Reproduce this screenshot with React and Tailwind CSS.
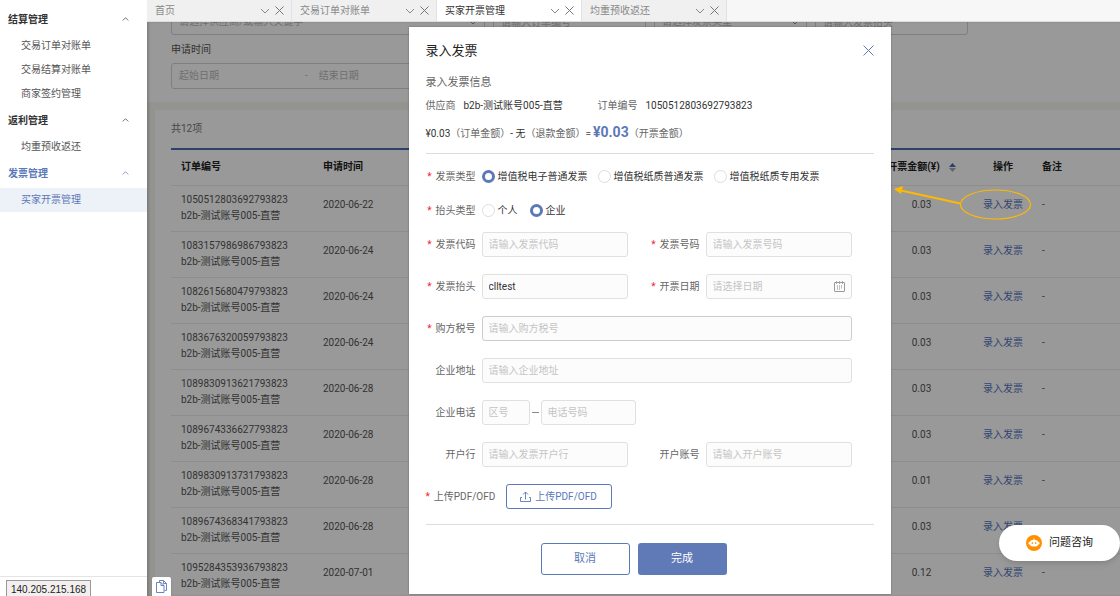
import React from 'react';
import clsx from 'clsx';

const MENU = [
  { title: '结算管理', items: ['交易订单对账单', '交易结算对账单', '商家签约管理'] },
  { title: '返利管理', items: ['均重预收返还'] },
  { title: '发票管理', items: ['买家开票管理'], active: true },
];

const TABS = ['首页', '交易订单对账单', '买家开票管理', '均重预收返还'];

const ORDERS = [
  { id: '1050512803692793823', date: '2020-06-22', amount: '0.03' },
  { id: '1083157986986793823', date: '2020-06-24', amount: '0.03' },
  { id: '1082615680479793823', date: '2020-06-24', amount: '0.03' },
  { id: '1083676320059793823', date: '2020-06-24', amount: '0.03' },
  { id: '1089830913621793823', date: '2020-06-28', amount: '0.03' },
  { id: '1089674336627793823', date: '2020-06-28', amount: '0.03' },
  { id: '1089830913731793823', date: '2020-06-28', amount: '0.01' },
  { id: '1089674368341793823', date: '2020-06-28', amount: '0.03' },
  { id: '1095284353936793823', date: '2020-07-01', amount: '0.12' },
];

const Chevron = ({ up, className }) => (
  <svg viewBox="0 0 10 6" className={className} fill="none" stroke="currentColor" strokeWidth="1">
    <path d={up ? 'M1 5 5 1l4 4' : 'M1 1l4 4 4-4'} />
  </svg>
);

const Cross = ({ className }) => (
  <svg viewBox="0 0 10 10" className={className} fill="none" stroke="currentColor">
    <path d="M.5.5l9 9M9.5.5l-9 9" vectorEffect="non-scaling-stroke" />
  </svg>
);

const Sidebar = () => (
  <aside className="w-[147px] shrink-0 flex flex-col bg-white">
    <nav className="pt-[5px] flex-1">
      {MENU.map((group) => (
        <div key={group.title}>
          <button
            type="button"
            className={clsx(
              'w-full h-[29px] pl-2 pr-[18px] flex items-center justify-between font-bold',
              group.active ? 'text-[#5b78b8]' : 'text-[#333]'
            )}
          >
            {group.title}
            <Chevron up className="w-[7px]" />
          </button>
          {group.items.map((item) => (
            <a
              key={item}
              href="#"
              className={clsx(
                'h-6 pl-[21px] flex items-center',
                group.active ? 'bg-[#edf1f8] text-[#5b78b8]' : 'text-[#555]'
              )}
            >
              {item}
            </a>
          ))}
        </div>
      ))}
    </nav>
    <div className="border-t border-[#e4e4e4] pt-[3px] pl-[6px]">
      <span className="block w-fit px-1 pt-[3px] leading-3 border border-b-0 border-[#999] bg-[#f3efef] text-[#222] font-['Liberation_Sans',sans-serif]">
        140.205.215.168
      </span>
    </div>
  </aside>
);

const TabBar = () => (
  <div className="h-[22px] shrink-0 flex bg-[#f7f7f7] border-b border-[#ddd]">
    {TABS.map((tab, i) => (
      <div
        key={tab}
        className={clsx(
          'w-[145px] flex items-center pl-2 pr-[7px] border-r border-[#e2e2e2]',
          i === 2 ? 'bg-white text-[#333]' : 'bg-[#f0f0f0] text-[#888]'
        )}
      >
        <button type="button" className="flex-1 text-left">{tab}</button>
        <button type="button" aria-label="展开" className="mr-[5px] text-[#888]">
          <Chevron className="w-[10px]" />
        </button>
        <button type="button" aria-label="关闭" className="text-[#777]">
          <Cross className="w-[9px]" />
        </button>
      </div>
    ))}
  </div>
);

const filterBox = 'w-full h-[26px] px-[7px] border border-[#d4d4d4] rounded-[3px] bg-white';

const FilterSelect = ({ label, className }) => (
  <div className={clsx('relative', className)}>
    <select aria-label={label} className={clsx(filterBox, 'appearance-none text-[#bbb]')}>
      <option>{label}</option>
    </select>
    <Chevron className="absolute right-2 top-[11px] w-2 text-[#777]" />
  </div>
);

const Filters = () => (
  <section className="bg-white pl-6 pb-[13px]">
    <div className="max-w-[797px] grid grid-cols-5 gap-x-2">
      <FilterSelect label="请选择供应商/或输入关键字" className="col-span-2" />
      <input aria-label="订单编号" placeholder="请输入订单编号" className={clsx(filterBox, 'placeholder:text-[#bbb]')} />
      <FilterSelect label="请选择发票类型" />
      <input aria-label="发票抬头" placeholder="请输入发票抬头" className={clsx(filterBox, 'placeholder:text-[#bbb]')} />
      <div className="col-span-2">
        <label htmlFor="apply-start" className="h-7 pt-[2px] flex items-center text-[#555]">申请时间</label>
        <div className={clsx(filterBox, 'flex items-center text-[#bbb]')}>
          <input id="apply-start" placeholder="起始日期" className="w-[126px] placeholder:text-[#bbb]" />
          <span>-</span>
          <input aria-label="结束日期" placeholder="结束日期" className="flex-1 min-w-0 pl-[11px] placeholder:text-[#bbb]" />
        </div>
      </div>
    </div>
  </section>
);

const OrderTable = () => (
  <section className="mt-2 ml-2 pl-4 pt-2 bg-white">
    <p className="h-[30px] pt-1 text-[#777]">共12项</p>
    <table className="w-full table-fixed border-t-2 border-[#4a6cb3] text-[#555]">
      <thead>
        <tr className="h-[36px] text-[#222] text-left border-b border-[#ececec]">
          <th className="w-[142px] pl-[10px]">订单编号</th>
          <th className="pl-[10px]">申请时间</th>
          <th className="w-[101px]">
            <span className="flex items-center justify-center gap-[9px]">
              开票金额(¥)
              <svg viewBox="0 0 7 9" className="w-[7px]">
                <path d="M3.5 0 7 4H0z" fill="#4a6cb3" />
                <path d="M3.5 9 0 5h7z" fill="#aaa" />
              </svg>
            </span>
          </th>
          <th className="w-[62px] text-center">操作</th>
          <th className="w-[86px] pl-2">备注</th>
        </tr>
      </thead>
      <tbody>
        {ORDERS.map((order) => (
          <tr key={order.id} className="h-[46px] border-b border-[#ececec]">
            <td className="pl-[10px] leading-4">
              {order.id}
              <br />
              b2b-测试账号005-直营
            </td>
            <td className="pl-[10px] pb-[6px]">{order.date}</td>
            <td className="pb-[6px] text-center">{order.amount}</td>
            <td className="pb-[6px] text-center">
              <a href="#" className="text-[#5574c0]">录入发票</a>
            </td>
            <td className="pl-2 pb-[6px]">-</td>
          </tr>
        ))}
      </tbody>
    </table>
  </section>
);

const Star = () => <span className="mr-1 text-[#f5222d]">*</span>;

const fieldBox =
  'h-[25px] min-w-0 px-[6px] border rounded-[3px] bg-[#fcfcfc] text-[#333] placeholder:text-[#c4c4c4]';

const Field = ({ id, label, required, wide, children, ...rest }) => (
  <div className={clsx('flex items-center gap-[6px]', wide && 'col-span-2')}>
    <label htmlFor={id} className="w-[50px] text-right whitespace-nowrap">
      {required && <Star />}
      {label}
    </label>
    {children || (
      <input id={id} className={clsx(fieldBox, 'flex-1', id === 'tax-no' ? 'border-[#ccc]' : 'border-[#e0e0e0]')} {...rest} />
    )}
  </div>
);

const RadioRow = ({ name, label, options, checked, className }) => (
  <div role="radiogroup" aria-labelledby={name} className="h-[25px] flex items-center gap-[6px]">
    <span id={name} className="w-[50px] text-right whitespace-nowrap">
      <Star />
      {label}
    </span>
    <div className={clsx('flex', className)}>
      {options.map((option, i) => (
        <label key={option} className="flex items-center gap-[3px] whitespace-nowrap text-[#333]">
          <input
            type="radio"
            name={name}
            defaultChecked={i === checked}
            className="appearance-none w-[13px] h-[13px] rounded-full border border-[#ddd] bg-white checked:border-[3px] checked:border-[#5b78b8]"
          />
          {option}
        </label>
      ))}
    </div>
  </div>
);

const CalendarIcon = () => (
  <svg viewBox="0 0 11 11" className="absolute right-[7px] top-[7px] w-[11px]" fill="none" stroke="#999">
    <rect x=".5" y="1.5" width="10" height="9" rx=".5" />
    <path d="M2.5 0v3M5.5 0v3M8.5 0v3" strokeWidth=".8" />
    <path d="M3.5 4v5M5.5 4v5M7.5 4v3.5" strokeWidth=".6" />
  </svg>
);

const InvoiceDialog = () => (
  <div role="dialog" aria-label="录入发票" className="w-[482px] self-start bg-white px-[17px] pb-[19px] text-[#666] shadow-[0_0_2px_rgba(0,0,0,0.3)]">
    <div className="h-[47px] flex items-center justify-between">
      <h1 className="text-[13px] text-[#222]">录入发票</h1>
      <button type="button" aria-label="关闭" className="text-[#5b78b8]">
        <Cross className="w-[11px]" />
      </button>
    </div>

    <h2 className="h-[18px] leading-[18px] text-[11px]">录入发票信息</h2>
    <div className="h-7 flex items-center">
      <p className="w-[172px] flex gap-2">
        供应商<span className="text-[#333]">b2b-测试账号005-直营</span>
      </p>
      <p className="flex gap-2">
        订单编号<span className="text-[#333]">1050512803692793823</span>
      </p>
    </div>
    <p className="h-[34px] flex items-baseline pt-[2px] border-b border-[#ddd] whitespace-nowrap">
      <span className="text-[#333]">¥0.03</span>（订单金额）
      <span className="text-[#333]">- 无</span>（退款金额）
      <span>=</span>
      <strong className="ml-[2px] text-[14px] leading-5 text-[#5b78b8]">¥0.03</strong>（开票金额）
    </p>

    <form className="pt-[10px] pr-[22px]">
      <div className="grid gap-[9px] mb-[9px]">
        <RadioRow
          name="invoice-type"
          label="发票类型"
          options={['增值税电子普通发票', '增值税纸质普通发票', '增值税纸质专用发票']}
          checked={0}
          className="gap-[10px]"
        />
        <RadioRow name="title-type" label="抬头类型" options={['个人', '企业']} checked={1} className="gap-3" />
      </div>
      <div className="grid grid-cols-2 gap-x-[22px] gap-y-[17px]">
        <Field id="code" label="发票代码" required placeholder="请输入发票代码" />
        <Field id="number" label="发票号码" required placeholder="请输入发票号码" />
        <Field id="title" label="发票抬头" required defaultValue="clltest" />
        <Field id="date" label="开票日期" required>
          <div className="relative flex-1 flex">
            <input id="date" placeholder="请选择日期" className={clsx(fieldBox, 'w-full border-[#e0e0e0]')} />
            <CalendarIcon />
          </div>
        </Field>
        <Field id="tax-no" label="购方税号" required wide placeholder="请输入购方税号" />
        <Field id="address" label="企业地址" wide placeholder="请输入企业地址" />
        <Field id="area" label="企业电话" wide>
          <div className="flex items-center">
            <input id="area" placeholder="区号" className={clsx(fieldBox, 'w-12 border-[#e0e0e0]')} />
            <span className="w-[7px] h-px mx-[2px] bg-[#888]" />
            <input aria-label="电话号码" placeholder="电话号码" className={clsx(fieldBox, 'w-[95px] border-[#e0e0e0]')} />
          </div>
        </Field>
        <Field id="bank" label="开户行" placeholder="请输入发票开户行" />
        <Field id="account" label="开户账号" placeholder="请输入开户账号" />
        <div className="col-span-2 flex items-center gap-[14px]">
          <span className="w-[66px] whitespace-nowrap">
            <Star />
            上传PDF/OFD
          </span>
          <button
            type="button"
            className="w-[106px] h-[25px] flex items-center justify-center gap-1 border border-[#5b78b8] rounded-[3px] text-[#5b78b8]"
          >
            <svg viewBox="0 0 11 11" className="w-[11px]" fill="none" stroke="currentColor" strokeWidth=".9">
              <path d="M2 6.5H.5v4h10v-4H9M5.5 8.500V1M3 3.500 5.500 1 8 3.500" />
            </svg>
            上传PDF/OFD
          </button>
        </div>
      </div>
    </form>

    <div className="mt-[15px] pt-[18px] pr-8 border-t border-[#ddd] flex justify-center gap-2 text-[11px]">
      <button type="button" className="w-[89px] h-8 border border-[#5b78b8] rounded-[3px] text-[#5b78b8]">取消</button>
      <button type="button" className="w-[89px] h-8 rounded-[3px] bg-[#607ab7] text-white">完成</button>
    </div>
  </div>
);

const App = () => (
  <div className="relative h-screen flex overflow-hidden bg-white text-[10px] leading-[14px] font-[Roboto,'Noto_Sans_CJK_SC',sans-serif]">
    <Sidebar />

    <div className="flex-1 min-w-0 flex flex-col">
      <TabBar />
      <main className="relative flex-1 min-h-0 overflow-hidden bg-[#f6f6f0]">
        {/* list page, scrolled a little */}
        <div className="-mt-[13px]">
          <Filters />
          <OrderTable />
        </div>

        <div className="absolute inset-0 flex justify-center pt-[5px] pl-8 bg-black/40 shadow-[inset_2px_0_2px_rgba(0,0,0,0.15)]">
          <InvoiceDialog />
        </div>

        <button
          type="button"
          aria-label="复制"
          className="absolute left-[5px] bottom-0 w-[19px] h-[19px] flex items-center justify-center rounded-t-[2px] bg-white text-[#5b78b8] shadow"
        >
          <svg viewBox="0 0 11 13" className="w-[11px]" fill="none" stroke="currentColor" strokeWidth=".9">
            <path d="M3.5 2V.5h4l3 3v7h-2M7.5.5v3h3" />
            <path d="M.5 2.5h4.500l3 3v7H.5zM5 2.500v3h3" />
          </svg>
        </button>
      </main>
    </div>

    {/* pointer from the table link to the dialog */}
    <svg viewBox="0 0 144 40" className="absolute top-[184px] right-[84px] w-36 h-10" fill="none" stroke="#ffb900">
      <ellipse cx="103.5" cy="20.5" rx="35" ry="14.5" strokeWidth="1.2" />
      <path d="M68.5 19.5 9 6.5" strokeWidth="2" />
      <path d="M2 5l9-3-2 8z" fill="#ffb900" stroke="none" />
    </svg>

    <button
      type="button"
      className="absolute right-0 bottom-[35px] h-9 px-[27px] flex items-center gap-[7px] rounded-full bg-white text-[11px] text-[#222] shadow-md"
    >
      <svg viewBox="0 0 16 16" className="w-4">
        <circle cx="8" cy="8" r="8" fill="#ff9100" />
        <path d="M7.5 3.5h1v2h-1z" fill="#fff" />
        <rect x="4" y="5" width="8" height="6.5" rx="2.5" fill="#fff" />
        <rect x="2.5" y="6.8" width="11" height="2.8" rx="1.2" fill="#fff" />
        <rect x="5.7" y="7" width="1.2" height="2" rx=".6" fill="#ff9100" />
        <rect x="9.1" y="7" width="1.2" height="2" rx=".6" fill="#ff9100" />
      </svg>
      问题咨询
    </button>
  </div>
);

export default App;
